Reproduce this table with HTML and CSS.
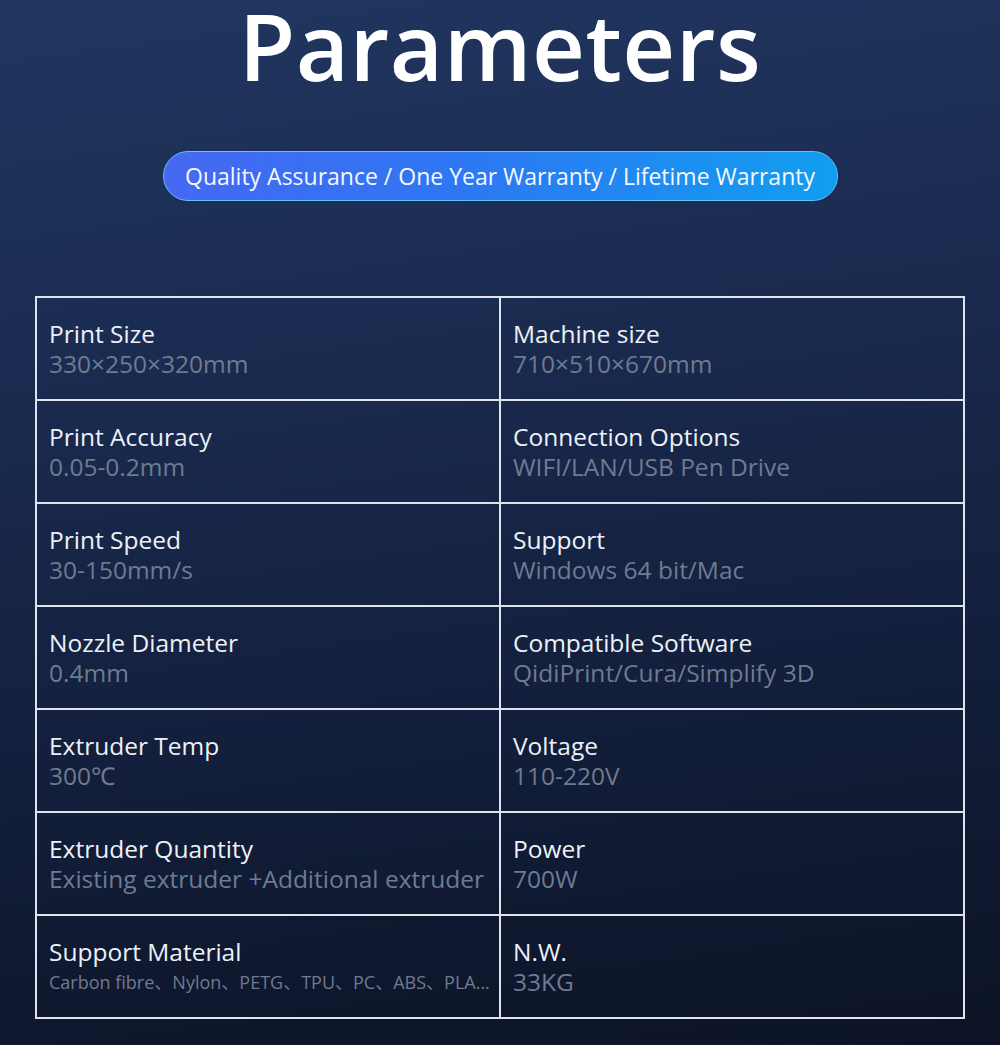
FILE: index.html
```html
<!DOCTYPE html>
<html lang="en">
<head>
<meta charset="utf-8">
<title>Parameters</title>
<link rel="stylesheet" href="styles.css">
</head>
<body>
<main class="page">
  <h1 class="title">Parameters</h1>
  <div class="pill-wrap">
    <div class="pill">Quality Assurance / One Year Warranty / Lifetime Warranty</div>
  </div>
  <div class="specs">
    <div class="cell"><div class="label">Print Size</div><div class="value">330×250×320mm</div></div>
    <div class="cell"><div class="label">Machine size</div><div class="value">710×510×670mm</div></div>
    <div class="cell"><div class="label">Print Accuracy</div><div class="value">0.05-0.2mm</div></div>
    <div class="cell"><div class="label">Connection Options</div><div class="value">WIFI/LAN/USB Pen Drive</div></div>
    <div class="cell"><div class="label">Print Speed</div><div class="value">30-150mm/s</div></div>
    <div class="cell"><div class="label">Support</div><div class="value">Windows 64 bit/Mac</div></div>
    <div class="cell"><div class="label">Nozzle Diameter</div><div class="value">0.4mm</div></div>
    <div class="cell"><div class="label">Compatible Software</div><div class="value">QidiPrint/Cura/Simplify 3D</div></div>
    <div class="cell"><div class="label">Extruder Temp</div><div class="value">300℃</div></div>
    <div class="cell"><div class="label">Voltage</div><div class="value">110-220V</div></div>
    <div class="cell"><div class="label">Extruder Quantity</div><div class="value">Existing extruder +Additional extruder</div></div>
    <div class="cell"><div class="label">Power</div><div class="value">700W</div></div>
    <div class="cell"><div class="label">Support Material</div><div class="value small">Carbon fibre、Nylon、PETG、TPU、PC、ABS、PLA...</div></div>
    <div class="cell"><div class="label">N.W.</div><div class="value">33KG</div></div>
  </div>
</main>
</body>
</html>
```

FILE: styles.css
```css
html, body {
  margin: 0;
  padding: 0;
}
body {
  width: 1000px;
  height: 1045px;
  overflow: hidden;
  background: linear-gradient(172deg, #203660 0%, #1b2c52 30%, #131f3c 65%, #0c1325 100%);
  font-family: "Open Sans", "Noto Sans", "Noto Sans CJK SC", sans-serif;
  color: #eef2f8;
}
.page {
  display: flex;
  flex-direction: column;
  align-items: center;
}
.title {
  margin: 0;
  height: 91px;
  font-size: 92px;
  font-weight: 600;
  line-height: 91px;
  color: #ffffff;
  letter-spacing: 0.5px;
}
.pill-wrap {
  margin-top: 60px;
}
.pill {
  width: 675px;
  height: 50px;
  box-sizing: border-box;
  border-radius: 25px;
  border: 1.5px solid #5fc3f4;
  background: linear-gradient(90deg, #4667f2 0%, #2d78f3 45%, #119ef0 100%);
  display: flex;
  align-items: center;
  justify-content: center;
  font-size: 23px;
  color: #f4f8ff;
  white-space: nowrap;
}
.specs {
  margin-top: 95px;
  width: 930px;
  display: grid;
  grid-template-columns: 464px 464px;
  box-sizing: border-box;
  border-top: 2px solid #dfe4ec;
  border-left: 2px solid #dfe4ec;
}
.cell {
  box-sizing: border-box;
  height: 103px;
  border-right: 2px solid #dfe4ec;
  border-bottom: 2px solid #dfe4ec;
  display: flex;
  flex-direction: column;
  justify-content: center;
  padding-left: 12px;
}
.label {
  font-size: 24.5px;
  line-height: 30px;
  color: #edf1f7;
}
.value {
  font-size: 24.5px;
  line-height: 30px;
  color: #6e7b90;
  white-space: nowrap;
}
.value.small {
  font-size: 18px;
}
```
